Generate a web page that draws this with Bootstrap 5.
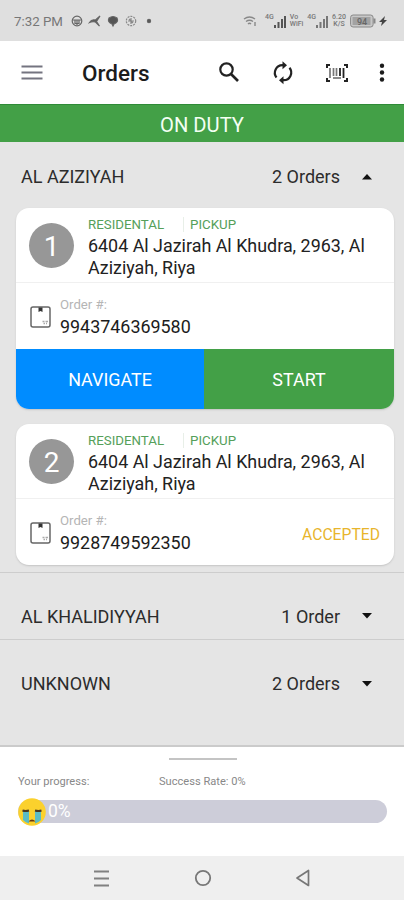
<!DOCTYPE html>
<html lang="en">
<head>
<meta charset="utf-8">
<meta name="viewport" content="width=device-width, initial-scale=1">
<title>Orders</title>
<link href="https://cdn.jsdelivr.net/npm/bootstrap@5.3.0/dist/css/bootstrap.min.css" rel="stylesheet">
<style>
body{font-family:Roboto,"Liberation Sans",sans-serif;background:#e5e5e5;width:404px;height:900px;overflow:hidden;color:#2c2c2c;font-size:18px;line-height:21px}
svg{display:block;flex:none}
.statusbar{height:41px;background:#dfdfdf;color:#777;font-size:13.3px;padding:1px 16px 0 14px}
.tiny-net{font-size:7px;line-height:7px;font-weight:500;color:#777}
.appbar{height:63px;background:#fff;padding:0 19px 0 21px}
.appbar h1{font-size:22.5px;font-weight:500;color:#1c1c1c;margin:1px 0 0 39px;line-height:26px}
.ic-sync{margin-left:32px}
.ic-scan{margin-left:31px}
.ic-more{margin-left:30px}
.duty{height:38px;background:#43a047;border-top:1px solid #2f8b38;color:#f3fff3;font-size:20.2px;padding-top:3px}
.area-head{padding:0 31px 0 21px}
.area-head svg{margin-left:21px}
.area-first{height:66px;padding-top:3px}
.area-two{height:67px;padding-top:20px;border-top:1px solid #cdcdcd}
.area-two.second{height:106px;padding-bottom:18px;padding-top:0}
.order-card{margin-left:16px;margin-right:10px;border-radius:13px;background:#fff;overflow:hidden;box-shadow:0 1px 2px #c4c4c4}
.order-last{margin-top:15px;margin-bottom:7px}
.order-top{height:75px;padding:8px 14px 0 13px;border-bottom:1px solid #f0f0f0}
.seq{width:45px;height:45px;margin-top:7px;padding-top:2px;background:#979797;color:#fff;font-size:28px;flex:none}
.order-text{margin-left:14px}
.tags{font-size:13.3px;line-height:17px;color:#55a05a}
.tags span+span{border-left:1px solid #e8efe8;margin-left:19px;padding-left:6px}
.addr{line-height:21.5px;color:#222;margin-top:2px;font-size:17.9px}
.order-mid{height:66px;padding:1px 14px 0 14px}
.order-no{margin-left:9px;color:#1c1c1c;font-size:17.9px}
.order-no small{display:block;font-size:13.2px;line-height:16px;color:#b5b5b5;margin-bottom:3px}
.act{height:60px;border-radius:0;border:0;color:#fff;font-size:17.9px;padding:3px 0 0}
.act-nav{background:#008cff;width:188px}
.act-start{background:#43a047}
.accepted{color:#e8b52c;font-size:15.7px;padding-top:3px}
.sheet{height:111px;background:#fff;border-top:2px solid #cbcbcb;padding:11px 17px 0 18px}
.grip{width:68px;height:2px;background:#c4c4c4}
.stats{font-size:11.1px;line-height:14px;color:#888;margin-top:15px}
.stat-own{width:141px}
.track{height:23px;border-radius:12px;background:#cdcdd9;margin-top:11px;color:#fff;font-size:17.5px}
.track svg{margin-right:2px}
.sysnav{height:44px;background:#efefef;padding:0 93px}
</style>
</head>
<body>
<div class="statusbar d-flex align-items-center justify-content-between">
  <div class="d-flex align-items-center">
    <span>7:32 PM</span>
    <svg class="ms-2" width="84" height="14" viewBox="0 0 84 14" fill="none" stroke="#666" stroke-width="1.200">
      <circle cx="6" cy="7" r="4.800"/><path d="M2 6h8M4 6v3.500h4V6M6 6v5"/>
      <path d="M18.500 8.500q2-3.500 6-2.500l4.500-4-3.500 5.500 3 4.500-4-4q-3-1-6 .500z" fill="#555"/>
      <path d="M38 4q4-3 8 0q2 4-3 6l-1 2-1-2q-5-2-3-6z" fill="#555"/>
      <circle cx="60" cy="7" r="4.700" stroke="#888" stroke-dasharray="2 1"/><path d="M57 7h6M60 4v6m-2-5 4 4" stroke="#888"/>
      <circle cx="78" cy="7" r="1.600" fill="#555"/>
    </svg>
  </div>
  <div class="d-flex align-items-center">
    <svg width="14" height="12" viewBox="0 0 14 12" fill="none" stroke="#888" stroke-width="1.400"><path d="M1 4q5.500-4 11 0M3 6.500q3.500-2.500 7 0M5 9q1.500-1.500 3 0M12 7v4"/></svg>
    <span class="tiny-net align-self-start ms-2">4G</span>
    <svg width="12" height="13" viewBox="0 0 12 13" fill="#555"><path d="M0 10h2v3H0zM3.500 7h2v6h-2zM7 4h2v9H7zM10 1h2v12h-2z"/></svg>
    <span class="tiny-net mx-1">Vo<br>WiFi</span>
    <span class="tiny-net align-self-start">4G</span>
    <svg width="12" height="13" viewBox="0 0 12 13" fill="#777"><path d="M0 10h2v3H0zM3.500 7h2v6h-2zM7 4h2v9H7zM10 1h2v12h-2z"/></svg>
    <span class="tiny-net mx-1 text-center">6.20<br>K/S</span>
    <svg width="38" height="14" viewBox="0 0 38 14"><rect x=".6" y="1" width="22.500" height="12" rx="2.500" fill="#c8c8c8" stroke="#888"/><rect x="2.500" y="3" width="18" height="8" fill="#a2a2a2"/><path d="M24.500 4.500v5" stroke="#888" stroke-width="2"/><text x="12" y="10.500" text-anchor="middle" font-size="9" font-weight="500" fill="#666">94</text><path d="m35 2-6 6h3l-1 4 6-6h-3z" fill="#444"/></svg>
  </div>
</div>

<nav class="appbar d-flex align-items-center">
  <svg width="22" height="16" viewBox="0 0 22 16" stroke="#747480" stroke-width="2"><path d="M.500 1.500h21M.500 7.500h21M.500 13.500h21"/></svg>
  <h1>Orders</h1>
  <div class="d-flex align-items-center ms-auto">
    <svg width="22" height="22" viewBox="0 0 22 22" fill="none" stroke="#222" stroke-width="2.200"><circle cx="8.500" cy="7.500" r="6.200"/><path d="m13 12 7 7" stroke-width="2.600"/></svg>
    <svg class="ic-sync" width="22" height="24" viewBox="0 0 22 24" fill="none" stroke="#222" stroke-width="2.200"><path d="M12.500 4.200H10.500A7.600 7.600 0 0 0 4.500 16.500M9.500 19.200h2A7.600 7.600 0 0 0 17.500 6.800"/><path d="m10.500.200 4.500 4-4.500 4zM11.500 15.200v8l-4.500-4z" fill="#222" stroke="none"/></svg>
    <svg class="ic-scan" width="24" height="20" viewBox="0 0 24 20" fill="none" stroke="#222" stroke-width="2"><path d="M5 2H2v3M19 2h3v3M5 18H2v-3M19 18h3v-3"/><path d="M5 5v10M8.500 5v8M11.500 5v8" stroke="#777" stroke-width="1.700"/><path d="M15 5v8M18.500 5v10" stroke-width="1.800"/><path d="M8 15h8" stroke="#666" stroke-width="1.500"/></svg>
    <svg class="ic-more" width="6" height="20" viewBox="0 0 6 20" fill="#1b1b1b"><circle cx="3" cy="2.700" r="2.200"/><circle cx="3" cy="9.500" r="2.200"/><circle cx="3" cy="16.500" r="2.200"/></svg>
  </div>
</nav>

<div class="duty d-flex align-items-center justify-content-center">ON DUTY</div>

<div class="area-head area-first d-flex align-items-center">
  <span>AL AZIZIYAH</span><span class="ms-auto">2 Orders</span>
  <svg width="12" height="6" viewBox="0 0 12 6"><path d="M1 5.500 6 0l5 5.500z" fill="#111"/></svg>
</div>

<div class="order-card">
  <div class="order-top d-flex">
    <div class="seq rounded-circle d-flex align-items-center justify-content-center">1</div>
    <div class="order-text"><div class="tags"><span>RESIDENTAL</span><span>PICKUP</span></div><div class="addr">6404 Al Jazirah Al Khudra, 2963, Al<br>Aziziyah, Riya</div></div>
  </div>
  <div class="order-mid d-flex align-items-center">
    <svg width="21" height="22" viewBox="0 0 21 22" fill="none" stroke="#666" stroke-width="1.500"><rect x="1" y="1" width="19" height="20" rx="2"/><path d="M8.500 1.500h4v4.500l-2-1-2 1z" fill="#333" stroke="none"/><path d="M12.500 15.500h2m1 0h2.500m-4.500 2h1.500m1 0h1" stroke="#aaa"/></svg>
    <div class="order-no"><small>Order #:</small>9943746369580</div>
  </div>
  <div class="d-flex">
    <button class="btn act act-nav">NAVIGATE</button><button class="btn act act-start flex-fill">START</button>
  </div>
</div>

<div class="order-card order-last">
  <div class="order-top d-flex">
    <div class="seq rounded-circle d-flex align-items-center justify-content-center">2</div>
    <div class="order-text"><div class="tags"><span>RESIDENTAL</span><span>PICKUP</span></div><div class="addr">6404 Al Jazirah Al Khudra, 2963, Al<br>Aziziyah, Riya</div></div>
  </div>
  <div class="order-mid d-flex align-items-center">
    <svg width="21" height="22" viewBox="0 0 21 22" fill="none" stroke="#666" stroke-width="1.500"><rect x="1" y="1" width="19" height="20" rx="2"/><path d="M8.500 1.500h4v4.500l-2-1-2 1z" fill="#333" stroke="none"/><path d="M12.500 15.500h2m1 0h2.500m-4.500 2h1.500m1 0h1" stroke="#aaa"/></svg>
    <div class="order-no"><small>Order #:</small>9928749592350</div>
    <span class="accepted ms-auto">ACCEPTED</span>
  </div>
</div>

<div class="area-head area-two d-flex align-items-center">
  <span>AL KHALIDIYYAH</span><span class="ms-auto">1 Order</span>
  <svg width="12" height="6" viewBox="0 0 12 6"><path d="M1 0h10L6 5.500z" fill="#111"/></svg>
</div>
<div class="area-head area-two second d-flex align-items-center">
  <span>UNKNOWN</span><span class="ms-auto">2 Orders</span>
  <svg width="12" height="6" viewBox="0 0 12 6"><path d="M1 0h10L6 5.500z" fill="#111"/></svg>
</div>

<div class="sheet">
  <div class="grip mx-auto"></div>
  <div class="stats d-flex"><span class="stat-own">Your progress:</span><span>Success Rate: 0%</span></div>
  <div class="track d-flex align-items-center">
    <svg width="28" height="28" viewBox="0 0 28 28"><circle cx="14" cy="14" r="13.800" fill="#fbd12d"/><path d="M5 13h6v12.500q-3-.500-6-3.500zM17 13h6v9q-3 3-6 3.500z" fill="#5bbcc4"/><path d="M4.500 12.500q3 1 6.500 0M17 12.500q3.500 1 6.500 0" fill="none" stroke="#4a3820" stroke-width="2"/><path d="M10.500 23.500q3.500-4 7 0z" fill="#6b3a12"/></svg>
    <span>0%</span>
  </div>
</div>
<div class="sysnav d-flex align-items-center justify-content-between">
  <svg width="17" height="17" viewBox="0 0 17 17" stroke="#808080" stroke-width="1.800"><path d="M1 1.500h15M1 8.500h15M1 15.500h15"/></svg>
  <svg width="18" height="18" viewBox="0 0 18 18" fill="none" stroke="#777" stroke-width="1.800"><circle cx="9" cy="9" r="7.200"/></svg>
  <svg width="16" height="18" viewBox="0 0 16 18" fill="none" stroke="#777" stroke-width="1.700"><path d="M13.500 1.500v15L2 9z" stroke-linejoin="round"/></svg>
</div>
<script src="https://cdn.jsdelivr.net/npm/bootstrap@5.3.0/dist/js/bootstrap.bundle.min.js"></script>
</body>
</html>
